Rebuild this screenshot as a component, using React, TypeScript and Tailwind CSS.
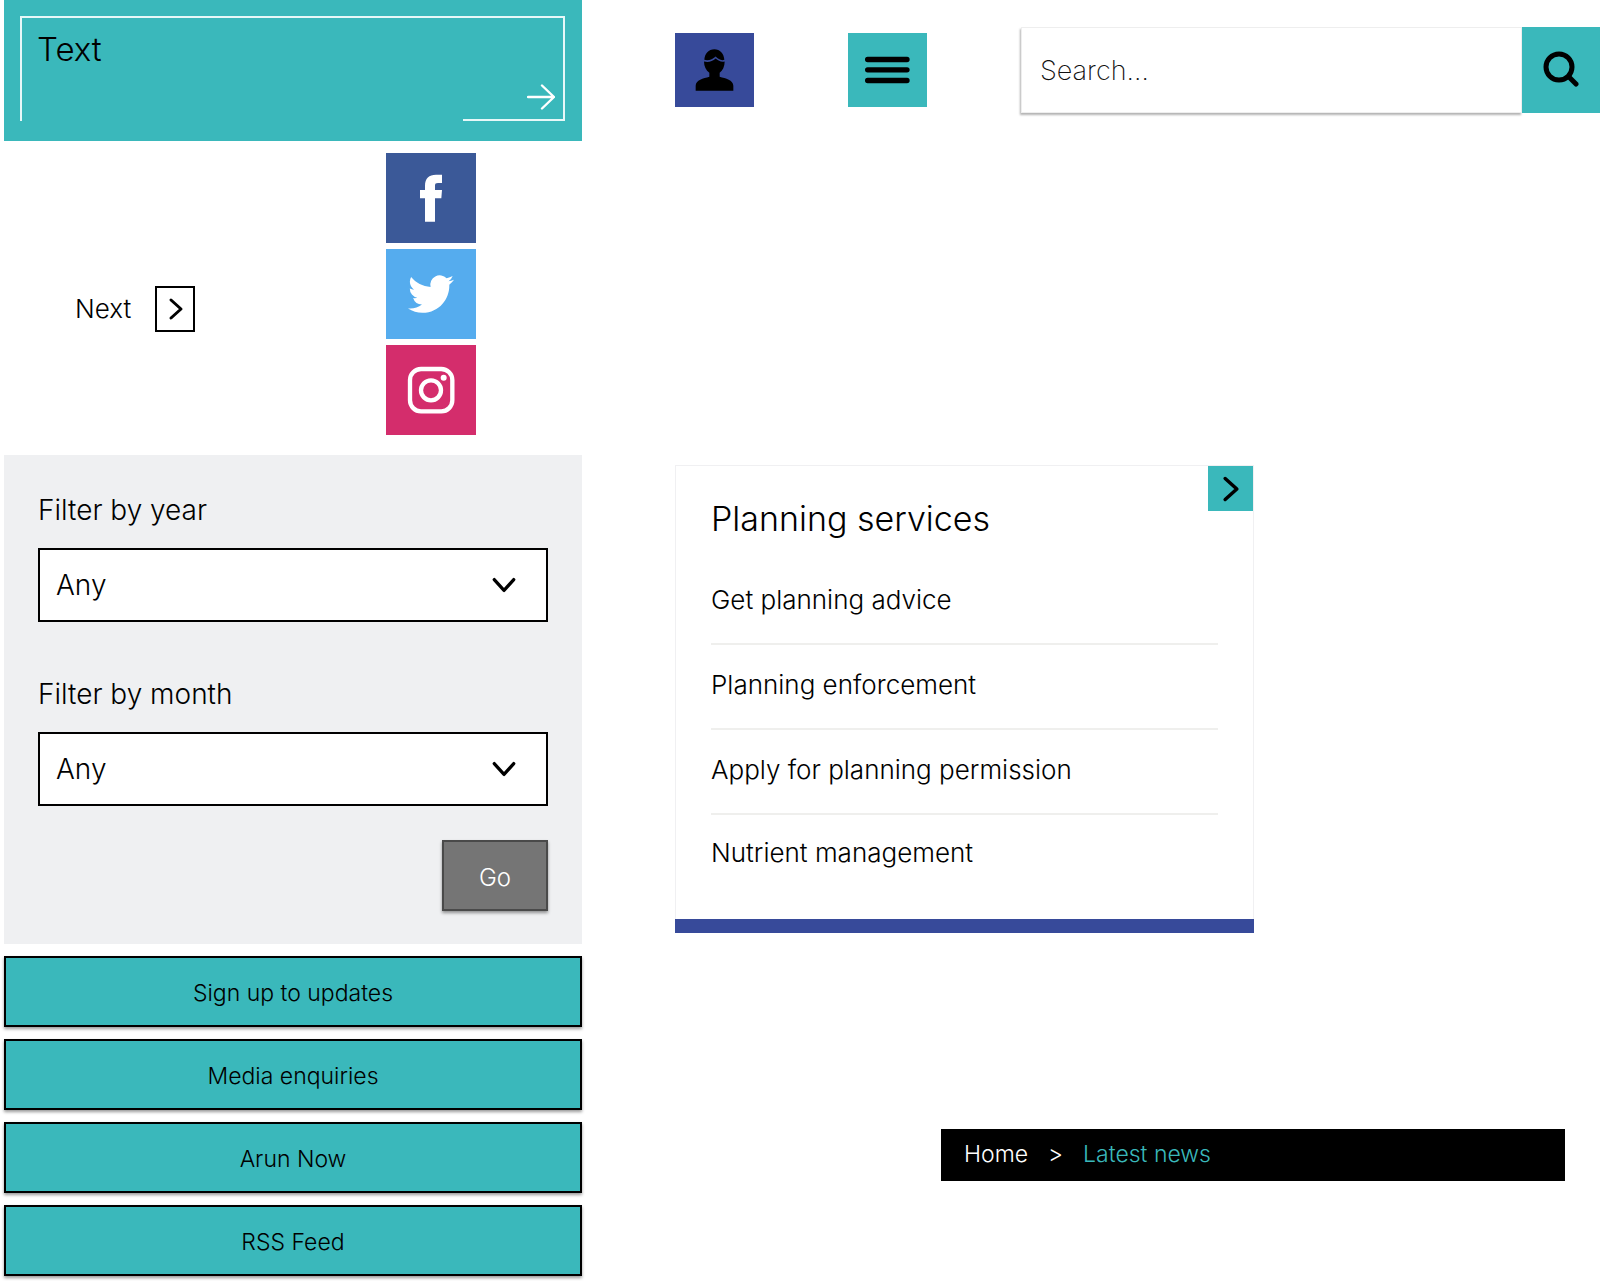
import React from "react";

function Chevron({ className }: { className: string }) {
  return (
    <svg viewBox="0 0 24 24" fill="none" stroke="currentColor" strokeWidth="3" strokeLinecap="round" strokeLinejoin="round" className={className} aria-hidden="true">
      <path d="M7 3l10 9-10 9" />
    </svg>
  );
}

function TextCard() {
  return (
    <a href="#text" className="block bg-[#3ab8bb] pt-4 pr-[17px] pb-5 pl-4">
      <div className="relative h-[105px] border-2 border-b-0 border-[#e6f8f8] px-[15px] pt-2">
        <span className="block text-[33px] leading-[46px] font-light">Text</span>
        <span className="absolute right-0 bottom-0 h-0.5 w-[100px] bg-[#e6f8f8]" />
        <svg viewBox="0 0 28 28" className="absolute right-2 bottom-[10px] size-7" fill="none" stroke="#fff" strokeWidth="2.4" strokeLinecap="round" strokeLinejoin="round" aria-hidden="true">
          <path d="M1 14H27M15 2.500L27 14 15 25.500" />
        </svg>
      </div>
    </a>
  );
}

function Social() {
  return (
    <div className="flex flex-col gap-[6px]">
      <a href="#facebook" aria-label="Facebook" className="block size-[90px] bg-[#3b5998]">
        <svg viewBox="48 39 270 270" fill="#fff" className="size-full">
          <path d="M165 245V175H150V150H165V137C165 115 177 104 198 104H216V129H204C197 129 195 131 195 137V150H216L214 175H195V245Z" />
        </svg>
      </a>
      <a href="#twitter" aria-label="Twitter" className="flex size-[90px] items-center justify-center bg-[#55acee]">
        <svg viewBox="0 0 24 24" fill="#fff" className="size-[46px]">
          <path d="M23.953 4.570a10 10 0 01-2.825.775 4.958 4.958 0 002.163-2.723c-.951.555-2.005.959-3.127 1.184a4.920 4.920 0 00-8.384 4.482C7.690 8.095 4.067 6.130 1.640 3.162a4.822 4.822 0 00-.666 2.475c0 1.710.870 3.213 2.188 4.096a4.904 4.904 0 01-2.228-.616v.060a4.923 4.923 0 003.946 4.827 4.996 4.996 0 01-2.212.085 4.936 4.936 0 004.604 3.417 9.867 9.867 0 01-6.102 2.105c-.390 0-.779-.023-1.170-.067a13.995 13.995 0 007.557 2.209c9.053 0 13.998-7.496 13.998-13.985 0-.210 0-.420-.015-.630A9.935 9.935 0 0024 4.590z" />
        </svg>
      </a>
      <a href="#instagram" aria-label="Instagram" className="block size-[90px] bg-[#d42d6c]">
        <svg viewBox="48 616 270 270" fill="none" stroke="#fff" className="size-full">
          <rect x="120" y="688" width="127" height="127" rx="33" strokeWidth="13" />
          <circle cx="183" cy="752" r="30" strokeWidth="13" />
          <circle cx="221" cy="714" r="9" fill="#fff" stroke="none" />
        </svg>
      </a>
    </div>
  );
}

function Filter({ id, label }: { id: string; label: string }) {
  return (
    <div>
      <label htmlFor={id} className="block text-[28px] leading-9 font-light">{label}</label>
      <div className="relative mt-5">
        <select id={id} className="block h-[74px] w-full appearance-none border-2 border-black bg-white px-4 text-[28px] font-light outline-none">
          <option>Any</option>
        </select>
        <Chevron className="pointer-events-none absolute top-6 right-[31px] size-[26px] rotate-90" />
      </div>
    </div>
  );
}

const LINKS = ["Sign up to updates", "Media enquiries", "Arun Now", "RSS Feed"];
const SERVICES = ["Get planning advice", "Planning enforcement", "Apply for planning permission", "Nutrient management"];

export default function App() {
  return (
    <main className="grid grid-cols-[578fr_925fr] gap-x-[93px] bg-white pl-1 font-['Inter',sans-serif] text-black">
      <div>
        <TextCard />
        <div className="mt-3 flex items-start gap-[191px]">
          <button type="button" className="mt-[133px] ml-[71px] flex items-center gap-6">
            <span className="text-[26px] leading-8 font-light">Next</span>
            <span className="flex h-[46px] w-10 items-center justify-center border-2 border-black pl-0.5">
              <Chevron className="size-6" />
            </span>
          </button>
          <Social />
        </div>
        <form onSubmit={(e) => e.preventDefault()} className="mt-5 bg-[#eff0f2] px-[34px] pt-[37px] pb-[33px]">
          <Filter id="year" label="Filter by year" />
          <div className="mt-[54px]">
            <Filter id="month" label="Filter by month" />
          </div>
          <div className="mt-[34px] flex justify-end">
            <button type="submit" className="h-[71px] w-[106px] border-2 border-[#4a4a4a] bg-[#757575] pt-1 text-2xl font-light text-white shadow-[0_2px_3px_rgba(0,0,0,0.4)]">Go</button>
          </div>
        </form>
        <div className="mt-3 flex flex-col gap-3 pb-[5px]">
          {LINKS.map((l) => (
            <button key={l} type="button" className="h-[71px] border-2 border-black bg-[#3ab8bb] pt-1 text-[23px] font-light shadow-[0_2px_3px_rgba(0,0,0,0.4)]">{l}</button>
          ))}
        </div>
      </div>

      <div className="pt-[27px]">
        <div className="flex items-center">
          <button type="button" aria-label="Account" className="h-[74px] w-[79px] shrink-0 bg-[#374a9a]">
            <svg viewBox="46 40 237 219" className="size-full" aria-hidden="true">
              <path d="M134 119C135 100 147 87 164 87S193 100 194 119C184 122 176 117 168 109 158 118 146 123 134 119Z" />
              <path d="M133 124C146 127 158 124 168 115 176 122 184 126 195 124 195 139 189 151 180 158V170C198 175 221 180 221 197V212H108V197C108 180 131 175 149 170V158C139 150 133 139 133 124Z" />
            </svg>
          </button>
          <button type="button" aria-label="Menu" className="ml-[94px] h-[74px] w-[79px] shrink-0 bg-[#3ab8bb]">
            <svg viewBox="565 40 237 219" className="size-full" stroke="#000" strokeWidth="16" strokeLinecap="round" aria-hidden="true">
              <path d="M624 118H742M624 149H742M624 181H742" />
            </svg>
          </button>
          <form onSubmit={(e) => e.preventDefault()} className="ml-[94px] flex flex-1">
            <input type="search" aria-label="Search" placeholder="Search…" className="h-[86px] min-w-0 flex-1 border border-[#eeeeee] px-[18px] text-[27px] font-extralight outline-none placeholder:text-[#111] shadow-[-1px_2px_2px_rgba(0,0,0,0.3)]" />
            <button type="submit" aria-label="Submit search" className="flex h-[86px] w-[78px] items-center justify-center bg-[#3ab8bb] pb-0.5">
              <svg viewBox="0 0 36 36" fill="none" stroke="#000" strokeWidth="5" strokeLinecap="round" className="size-9">
                <circle cx="16" cy="16" r="13" />
                <path d="M25.500 25.500L33 33" />
              </svg>
            </button>
          </form>
        </div>

        <section className="mt-[352px] w-[579px]">
          <div className="relative border border-b-0 border-[#f0f0f2] px-[35px] pt-[31px] pb-[24px]">
            <h2 className="text-[34px] leading-[44px] font-light">Planning services</h2>
            <ul className="mt-[19px]">
              {SERVICES.map((s) => (
                <li key={s} className="flex h-[85px] items-center border-b-2 border-[#efefed] pb-1 last:h-[80px] last:border-b-0">
                  <a href="#service" className="text-[26px] leading-8 font-light">{s}</a>
                </li>
              ))}
            </ul>
            <button type="button" aria-label="Open planning services" className="absolute top-0 right-0 flex size-[45px] items-center justify-center bg-[#3ab8bb]">
              <Chevron className="size-7" />
            </button>
          </div>
          <div className="h-[14px] bg-[#374a9a]" />
        </section>

        <nav aria-label="Breadcrumb" className="mt-[196px] mr-[35px] ml-[266px] flex h-[52px] items-center bg-black px-[23px] pb-0.5 text-[23px] font-light text-white">
          <a href="#home">Home</a>
          <span className="mx-5">&gt;</span>
          <a href="#news" className="text-[#3ab8bb]">Latest news</a>
        </nav>
      </div>
    </main>
  );
}
